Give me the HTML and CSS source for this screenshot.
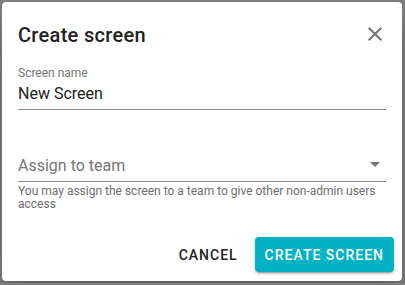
FILE: index.html
```html
<!DOCTYPE html>
<html lang="en">
<head>
    <meta charset="UTF-8">
    <meta name="viewport" content="width=device-width, initial-scale=1.0">
    <title>Create screen</title>
    <link rel="stylesheet" href="styles.css">
</head>
<body>
    <div class="dialog">
        <div class="dialog-header">
            <h2 class="dialog-title">Create screen</h2>
            <button class="icon-button" aria-label="Close">
                <svg width="24" height="24" viewBox="0 0 24 24"><path fill="currentColor" d="M19 6.41L17.59 5 12 10.59 6.41 5 5 6.41 10.59 12 5 17.59 6.41 19 12 13.41 17.59 19 19 17.59 13.41 12z"/></svg>
            </button>
        </div>
        <div class="dialog-content">
            <div class="field">
                <label class="field-label" for="name">Screen name</label>
                <input id="name" class="field-input" type="text" value="New Screen">
            </div>
            <div class="field field-select">
                <div class="select">
                    <span class="select-placeholder">Assign to team</span>
                    <svg class="select-arrow" width="24" height="24" viewBox="0 0 24 24"><path fill="currentColor" d="M7 10l5 5 5-5z"/></svg>
                </div>
                <p class="field-helper">You may assign the screen to a team to give other non-admin users access</p>
            </div>
        </div>
        <div class="dialog-actions">
            <button class="btn btn-text">Cancel</button>
            <button class="btn btn-primary">Create screen</button>
        </div>
    </div>
</body>
</html>
```

FILE: styles.css
```css
body {
    margin: 0;
    padding: 2px;
    background-color: #7f7f7f;
    font-family: Roboto, "Liberation Sans", sans-serif;
    color: #212121;
}
.dialog {
    width: 400px;
    box-sizing: border-box;
    background: #ffffff;
    border-radius: 4px;
    box-shadow: 0 11px 15px -7px rgba(0, 0, 0, 0.2), 0 24px 38px 3px rgba(0, 0, 0, 0.14);
}
.dialog-header {
    display: flex;
    align-items: center;
    justify-content: space-between;
    padding: 16px 16px 0 16px;
    height: 32px;
}
.dialog-title {
    margin: 0;
    font-size: 20px;
    font-weight: 500;
    letter-spacing: 0.3px;
    line-height: 32px;
    padding-top: 1px;
}
.icon-button {
    border: none;
    background: none;
    padding: 0;
    margin-right: -1px;
    width: 24px;
    height: 24px;
    color: #757575;
    cursor: pointer;
}
.icon-button svg {
    display: block;
}
.dialog-content {
    padding: 15px 16px 0 16px;
}
.field {
    display: flex;
    flex-direction: column;
}
.field-label {
    font-size: 12px;
    line-height: 16px;
    color: #757575;
}
.field-input {
    font-family: inherit;
    font-size: 16px;
    line-height: 20px;
    color: #212121;
    border: none;
    border-bottom: 1px solid #8c8c8c;
    padding: 2px 0 6px 0;
    margin: 0;
    outline: none;
    box-sizing: border-box;
    height: 29px;
}
.field-select {
    margin-top: 46px;
}
.select {
    display: flex;
    align-items: center;
    justify-content: space-between;
    border-bottom: 1px solid #8c8c8c;
    height: 25px;
}
.select-placeholder {
    font-size: 16px;
    line-height: 20px;
    color: #757575;
    padding-bottom: 5px;
}
.select-arrow {
    color: #757575;
    margin-right: -1px;
    margin-bottom: 9px;
}
.field-helper {
    margin: 3px 0 0 0;
    font-size: 12px;
    line-height: 13px;
    color: #6e6e6e;
}
.dialog-actions {
    display: flex;
    justify-content: flex-end;
    gap: 7px;
    padding: 26px 8px 9px 8px;
}
.btn {
    font-family: inherit;
    font-size: 14px;
    font-weight: 500;
    letter-spacing: 1px;
    text-transform: uppercase;
    height: 35px;
    padding: 0 10px;
    border: none;
    border-radius: 4px;
    cursor: pointer;
}
.btn-text {
    background: none;
    color: #212121;
}
.btn-primary {
    background-color: #00b2c3;
    color: #ffffff;
    box-shadow: 0 3px 1px -2px rgba(0, 0, 0, 0.2), 0 2px 2px 0 rgba(0, 0, 0, 0.14), 0 1px 5px 0 rgba(0, 0, 0, 0.12);
}
```
